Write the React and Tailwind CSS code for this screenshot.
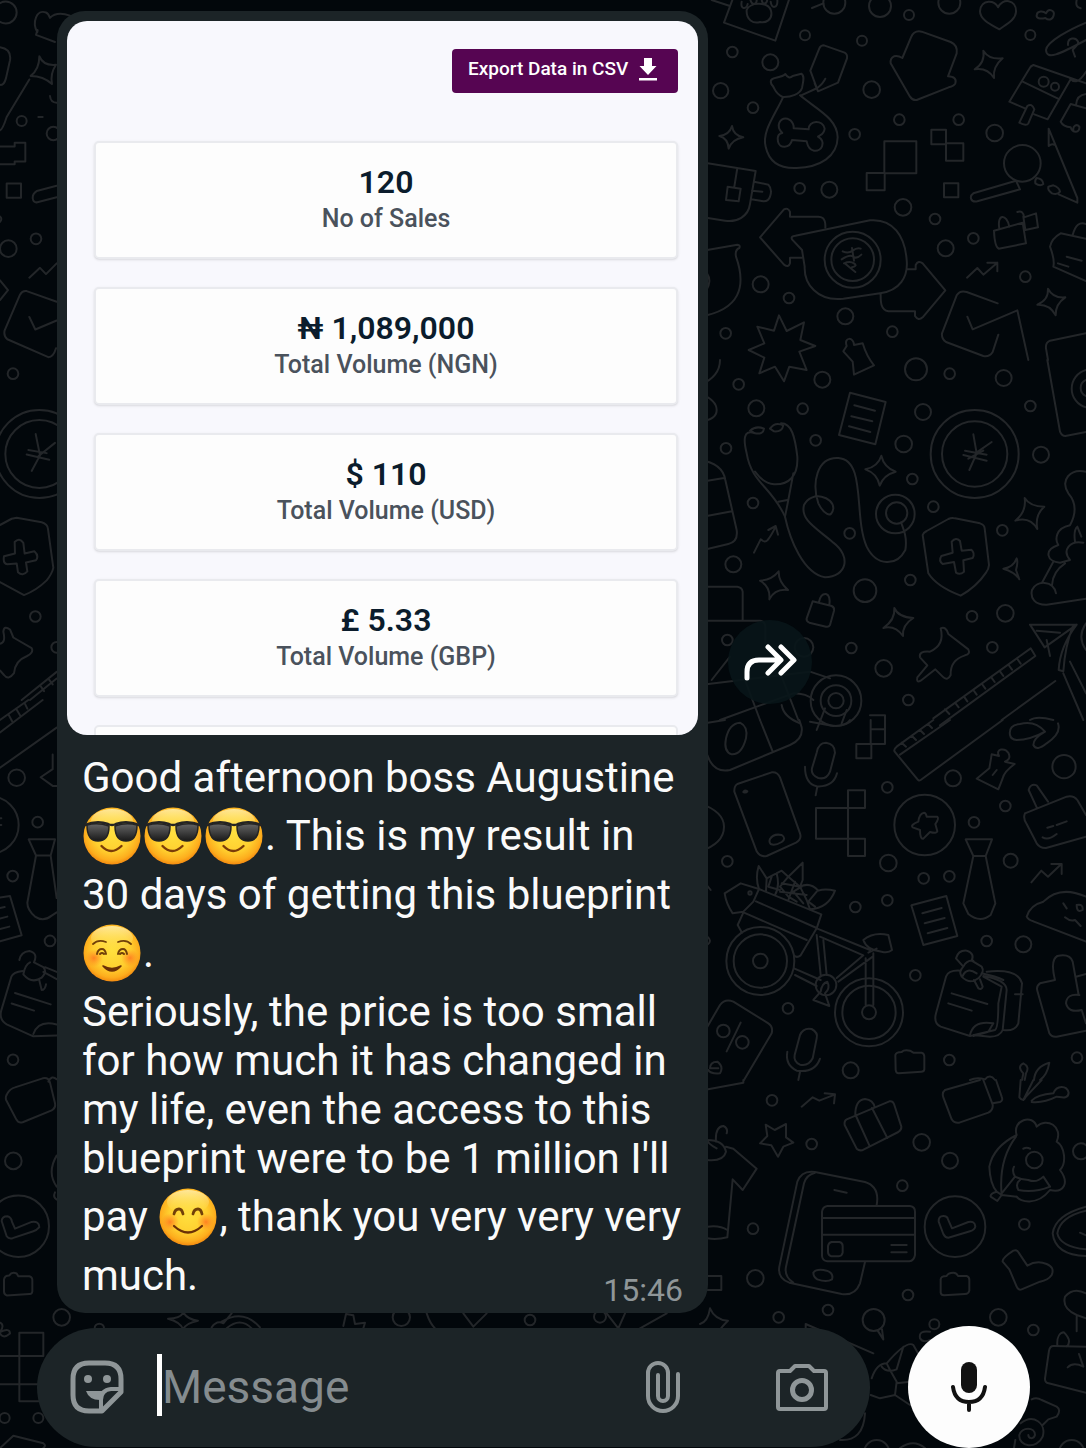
import { useId } from 'react';

const stats = [
    { value: '120', label: 'No of Sales' },
    { value: '₦ 1,089,000', label: 'Total Volume (NGN)' },
    { value: '$ 110', label: 'Total Volume (USD)' },
    { value: '£ 5.33', label: 'Total Volume (GBP)' },
];

// Wallpaper doodles, grouped in tiles. Circles are [cx, cy, r], in tile units.
const tiles = [
    {
        x: 700, y: 0, sx: 3, sy: 3,
        circles: [
            [403, 8, 33], [540, 18, 33], [627, 45, 15], [748, 8, 33], [991, 105, 15], [315, 106, 15], [486, 122, 15],
            [97, 156, 16], [211, 187, 24], [62, 272, 23], [159, 323, 16], [515, 269, 25], [598, 359, 16], [776, 359, 16],
            [464, 403, 16], [884, 399, 25], [299, 565, 16], [388, 569, 24], [609, 622, 25], [705, 657, 16], [820, 715, 16],
            [737, 745, 24], [182, 853, 24], [267, 894, 16], [436, 949, 24], [77, 1000, 16], [577, 995, 16], [976, 830, 16],
            [967, 490, 55], [458, 779, 84], [458, 779, 64], [1031, 245, 15], [1065, 260, 12],
        ],
        paths: [
            'M35 0L90 18M108 -30L72 68L226 122L275 -25', 'M140 30C150 5 205 5 213 32C220 60 195 70 180 66C160 72 138 60 140 30M125 5C120 30 140 28 143 12M150 -5C155 20 172 15 170 -5M185 -5C185 18 202 14 202 -5M212 5C214 28 234 25 232 0',
            'M336 24L370 10', 'M898 88C875 75 840 60 840 34C842 -5 888 0 894 22C905 -5 950 -5 948 36C947 60 915 75 898 88Z',
            'M1010 45C1012 32 1030 32 1038 40C1046 22 1065 32 1061 46C1058 60 1045 62 1036 54C1020 58 1008 55 1010 45Z',
            'M1158 68C1110 88 1040 125 1038 150C1040 180 1075 165 1158 120M1104 135C1102 112 1128 110 1134 125C1138 135 1122 142 1118 150L1125 170', 'M1130 0Q1125 22 1142 25',
            'M607 174L633 112Q642 90 665 95L752 126Q774 136 770 160L744 229Q772 230 766 250Q762 258 746 262L650 300Q638 302 630 290L572 190Q570 174 582 169Q594 166 607 174Z',
            'M850 152Q868 180 908 175Q878 200 882 234Q862 202 824 208Q856 188 850 152Z', 'M96 378Q100 406 130 412Q96 418 86 446Q84 415 58 408Q88 405 96 378Z',
            'M372 136L434 158Q443 163 441 175L414 248L354 274L331 212L358 145Q362 136 372 136ZM302 287L352 264Q370 250 376 236M344 250L354 274',
            'M248 291C222 278 228 268 214 252C204 228 240 238 256 222C262 232 270 236 278 228L304 221C316 228 308 250 306 264C300 282 274 292 248 291Z',
            'M249 292C225 345 185 395 197 440C208 490 245 506 290 504C360 502 412 470 413 412C412 355 350 328 300 286',
            'M247 399C225 378 240 352 262 356C280 362 282 380 281 385L326 388C325 360 370 358 374 386C372 404 362 404 354 410C380 425 365 456 342 452C322 448 322 430 320 424L276 420C270 446 238 446 234 425C230 405 240 400 247 399Z',
            'M0 486L167 513L150 612C145 650 110 668 75 662L0 650M112 504L103 560M83 560L122 566L116 604L78 600ZM162 545L205 554Q218 568 210 590Q205 605 190 604L154 598M156 572L187 575',
            'M1000 195L1158 250M1000 195Q992 198 988 206L928 305L975 325M1003 343L1043 358L1112 238M968 245L1074 296M982 318Q995 308 1003 328L985 370Q980 380 958 368ZM1158 215Q1130 260 1110 235',
            'M1158 325L1112 312L1082 365Q1090 380 1112 382C1118 400 1140 400 1138 380C1130 370 1118 378 1120 390M1128 315Q1130 285 1158 282', 'M1046 386V438Q1055 430 1062 434M1046 386L1132 594V608L1076 583M1060 556Q1078 562 1080 575Q1072 586 1056 580Q1042 570 1045 560ZM1010 534Q1028 536 1030 552Q1020 560 1006 550Q1004 540 1010 534Z',
            'M820 580L948 542L960 568L832 604C810 608 808 588 820 580Z',
            'M553 424H649V520H553ZM500 519H554V571H500ZM694 389H738V433H694ZM738 430H790V482H738ZM732 550H775V592H732Z',
            'M376 683C378 650 360 650 355 650H270V635Q263 622 252 628L180 712L252 794Q266 804 270 790V773H306', 'M276 718C272 710 280 708 286 707L510 661C580 655 615 710 620 780C625 830 600 872 540 880L430 896C350 905 312 850 314 800L306 750L276 718M620 808H647V795Q655 780 668 790L736 871L668 952Q655 964 645 948V934H565C540 930 542 900 542 880',
            'M428 754Q445 762 458 752T482 746M425 778Q450 762 460 770T484 764M456 744L462 782M432 790Q450 782 462 790T456 802M434 790L466 816',
            'M882 692L968 668L978 730L896 746Q884 740 882 692M898 686C890 640 920 640 928 680M952 636Q970 630 972 652L1008 640L1014 682L976 690M970 650L976 690',
            'M1158 716L1082 700Q1055 715 1050 740Q1065 780 1060 800L1158 843M1118 705Q1130 660 1158 672M1074 790L1105 800M1100 770L1145 782',
            'M801 833L832 804L850 824L892 788M862 788H892V814', 'M893 910L800 876Q780 870 770 886L726 1000Q724 1016 738 1026L850 1068Q868 1072 878 1056L895 1004M802 950L818 988L952 931L985 1080', 'M1044 866Q1060 896 1096 892Q1066 912 1067 946Q1050 912 1012 914Q1046 900 1044 866Z',
            'M0 754L112 734Q122 736 118 744Q104 750 108 770C140 860 120 930 0 950M0 802Q30 820 28 845T0 890',
            'M237 946L260 993L312 967L301 1020L346 1038L298 1055L320 1110L268 1100L252 1144L225 1100L178 1120L193 1073L146 1050L193 1030L172 980L222 992Z',
            'M1158 1000L1050 1022Q1036 1028 1038 1045L1044 1080M440 1038C430 1010 462 1010 462 1035L488 1030Q500 1070 522 1096L462 1124L458 1085L430 1054Z',
        ],
    },
    {
        x: 700, y: 360, sx: 3, sy: 3,
        circles: [
            [367, 59, 24], [116, 73, 16], [169, 145, 24], [308, 146, 16], [648, 28, 33], [749, 41, 16], [911, 54, 24], [669, 156, 24],
            [991, 138, 16], [347, 241, 16], [611, 252, 25], [78, 265, 16], [824, 282, 132], [824, 282, 98], [1023, 284, 24],
            [637, 357, 16], [159, 429, 16], [586, 462, 58], [590, 459, 32], [700, 440, 16], [449, 520, 16], [907, 511, 16],
            [100, 613, 24], [495, 692, 34], [631, 660, 16], [816, 769, 16], [916, 760, 25], [82, 840, 16], [454, 864, 16],
            [551, 925, 25], [877, 862, 16], [408, 1022, 76], [408, 1022, 46], [408, 1022, 23], [625, 1020, 16], [312, 862, 28],
        ],
        paths: [
            'M0 100Q50 120 50 150Q50 180 0 184M0 75Q60 50 60 0', 'M450 98L557 126L526 253L417 225ZM463 136L525 152M454 169L517 184M447 199L511 216',
            'M161 218C130 210 130 240 140 280C155 370 215 380 255 470C270 540 310 640 375 652C440 650 455 590 400 548C350 505 300 480 312 435C335 390 400 410 400 445C395 480 370 460 355 430C335 370 350 290 415 294C500 300 460 470 500 560C530 620 590 620 616 570C622 535 612 510 603 487',
            'M243 190C275 190 285 230 292 290C295 350 265 375 222 373Q190 370 165 335M280 340L264 425L255 470M235 425L262 420',
            'M150 212Q168 196 192 206Q190 224 165 220ZM210 206Q225 184 250 196Q246 216 222 214Z',
            'M820 223L830 280L808 330M875 246L826 280M790 285L860 302M795 272L860 284M805 296L850 272',
            'M544 287Q552 322 587 335Q550 345 539 377Q532 340 496 328Q534 320 544 287Z', 'M974 414Q990 440 1033 440Q1004 465 1012 507Q990 468 946 482Q980 455 974 414Z',
            'M668 525Q670 518 680 513L745 477Q755 472 765 475L840 490Q853 494 854 505L867 615Q866 628 858 638Q830 680 782 707Q710 680 685 640ZM755 545Q768 530 780 543L785 572L814 569Q826 580 818 594L790 601L792 635Q780 646 768 638L762 606L728 612Q715 602 724 588L758 578Z',
            'M910 626Q940 622 950 595Q955 605 948 630L958 658Q945 636 910 626Z', 'M162 578L182 538Q195 550 203 540Q212 530 227 500M205 510L227 498L234 524',
            'M0 300Q68 310 76 360L110 510Q115 545 85 552L0 572M0 366L72 354M0 472L96 454', 'M0 680H112Q126 682 128 695V780M0 782H180Q195 784 196 800V850',
            'M236 634Q235 665 264 690Q225 685 208 718Q212 680 180 662Q215 660 236 634Z', 'M338 724L395 738Q404 742 402 752L390 795Q386 802 378 800L328 788Q318 784 320 775ZM357 726Q362 700 378 702Q392 706 388 736',
            'M583 744Q595 772 640 774Q606 795 609 828Q585 795 550 804Q586 780 583 744Z',
            'M722 805Q738 798 745 822L805 868Q812 882 795 886Q750 900 752 945Q742 965 728 950L706 928L662 962Q648 970 652 952L682 916L660 892Q655 872 690 875Q735 855 722 805Z',
            'M700 1075L992 865L1006 888L720 1096M735 1048L748 1062M765 1028L776 1042M792 1010L802 1024M820 990L830 1004M846 972L856 986M874 952L884 966M900 934L910 948M926 915L936 929M952 897L962 911M905 1080L1066 963',
            'M1042 0L1080 215Q1085 228 1096 228L1158 216M1158 30A58 58 0 0 0 1158 142M1158 60A26 26 0 0 0 1158 108',
            'M1158 335C1110 325 1080 360 1105 400Q1140 440 1110 496C1065 505 1065 540 1075 555C1030 570 1040 605 1080 608L1110 600C1085 570 1110 540 1150 548M1125 545Q1120 510 1132 500L1144 530M1060 605L1026 668M1095 610Q1058 635 1056 675M1068 700C1060 660 1010 660 996 690C990 715 1005 735 1040 734L1158 716',
            'M990 794H1130L1034 862ZM1010 812L1080 818M1040 840L1050 888M1130 794Q1080 860 1076 930L1090 934Q1095 860 1118 800M1090 940L1150 1080M1110 905L1158 1000M1158 790Q1130 830 1158 870',
            'M0 975L330 935L390 955M60 1080L280 1000Q320 1000 340 1020M135 960L180 1080M245 950L295 1080M35 960L90 890M245 1035Q250 1070 300 1090M375 1045L350 1110M440 1050L425 1090M510 1066H555V1080M990 1080Q1010 1066 1060 1080',
        ],
    },
    {
        x: 700, y: 720, sx: 3, sy: 3,
        circles: [
            [562, 202, 16], [759, 175, 24], [674, 315, 91], [822, 307, 16], [1092, 140, 35], [916, 258, 16], [565, 429, 25],
            [82, 424, 16], [671, 475, 16], [748, 469, 16], [932, 422, 21], [466, 561, 16], [562, 541, 16], [860, 663, 16],
            [970, 673, 24], [181, 723, 102], [181, 723, 80], [181, 723, 22], [507, 877, 102], [507, 877, 80], [507, 877, 21],
            [646, 766, 16], [264, 865, 16], [70, 933, 19], [127, 967, 19], [452, 1051, 24], [748, 1020, 16], [1131, 1013, 16], [150, 519, 5], [378, 795, 31],
        ],
        paths: [
            'M22 105Q40 160 90 150L270 75Q310 58 305 22L298 0M180 0L217 92M0 12L75 0', 'M120 8Q145 20 138 55Q125 105 95 103Q70 95 78 55Q88 10 120 8Z',
            'M330 5L400 18Q440 18 450 0', 'M512 0V70M555 0V72H512M512 28H555M469 72H514V115H469Z',
            'M350 98Q355 68 378 68Q405 72 405 98L390 155Q380 180 355 174Q332 165 336 145ZM315 140Q315 190 350 199Q400 202 411 160M352 200L347 226',
            'M112 192L215 157Q232 155 240 172L300 340Q306 358 288 368L200 408Q180 412 170 394L103 215Q102 198 112 192ZM210 357Q220 340 245 345Q260 355 245 366Q225 378 212 372Q206 366 210 357ZM130 216Q134 208 142 214Q138 220 130 216',
            'M348 264H444V356H348ZM444 211H495V264H444ZM444 356H495V408H444ZM444 211V408',
            'M672 278Q678 278 680 290L712 290Q718 295 706 312L712 334Q710 342 690 336L670 356Q660 358 660 330L638 322Q630 315 655 305Q658 280 672 278Z',
            'M908 0L662 180Q655 184 650 175L584 95Q580 88 590 80L700 0M600 104L750 0M605 68L618 80M636 48L648 60M660 30L672 42M684 12L696 24',
            'M930 45Q925 15 960 12Q1005 0 1035 35Q990 60 950 60Q932 58 930 45ZM1035 35Q1000 55 1000 75Q1010 95 1040 70Q1085 40 1074 10M0 250Q72 275 72 320Q72 370 0 394',
            'M897 108C885 85 915 82 926 100C932 115 925 120 915 125L944 132Q912 155 908 175L895 208L830 176L868 145L875 103ZM878 165L890 150',
            'M797 358H876L857 408H820ZM820 408L790 550L805 582Q840 610 872 585L886 550L857 408',
            'M975 280L1100 230Q1120 225 1132 240L1158 285M975 280Q968 295 980 312L1010 370Q1020 385 1038 384L1158 350M1010 262L986 210Q990 190 1010 196L1044 245M1042 323L1060 318M1070 315L1100 304M1028 352Q1045 362 1070 342',
            'M994 487L1024 452L1044 470L1084 432M1054 432H1085V462', 'M634 556L739 528L772 648L670 675ZM667 580L725 564M674 610L734 594M683 640L742 624',
            'M1158 530Q1080 495 1030 545Q990 555 980 590Q985 600 1000 604L1158 665M1090 550L1100 565M1095 592Q1110 605 1125 600L1142 618M1130 555Q1150 550 1148 570Q1130 580 1130 555',
            'M74 520L122 490L177 507L364 583L350 625L302 706Q290 715 282 706M74 520Q78 550 98 580L130 575L160 545L177 507M168 544L350 624M132 578L320 660M130 578L113 615L126 638',
            'M177 507Q165 475 176 438L200 475L245 452L265 470L308 428V480L300 500Q330 485 355 512Q375 505 405 512Q385 565 330 568M200 475L198 512M230 460Q240 500 225 525M265 470L240 500L265 530L290 545M265 470L300 500L320 540L330 568M245 490L300 500M240 515L320 525M285 485L265 540M305 500L280 515L310 550M350 515L325 545L345 560M215 470L205 500L240 510',
            'M350 625L510 690M360 650L490 706L410 774M350 645L362 765M370 660L380 765M497 715V855M520 700V855M518 710L415 785M282 745L362 780M285 765L350 798M490 660Q520 635 565 645L576 690Q565 700 545 695Q500 690 490 660M505 698L530 686M362 815L340 840L388 858L375 820Q392 805 382 785Q365 790 362 815',
            'M22 920L60 855Q75 835 100 845L205 910Q220 920 215 940L132 1080M122 908L80 994M30 1045Q30 1025 52 1025Q72 1040 60 1060Q30 1062 25 1050M30 1045H55',
            'M300 945Q310 922 335 927Q355 938 350 955L338 1015Q325 1040 300 1034Q280 1025 284 1005ZM262 995Q255 1035 290 1052Q345 1060 360 1016M300 1056L295 1080',
            'M780 752Q745 750 738 770L708 880Q700 910 722 920L810 948L885 930Q895 925 895 850L905 800L850 770M755 820L862 852M745 850L815 872M810 945Q820 900 880 910L865 935L820 948M850 768Q920 780 920 810L908 930Q900 950 870 950L820 945M860 755Q955 745 966 790L955 910Q945 935 910 930M845 760Q890 770 910 780M945 823H968',
            'M768 715Q775 690 800 692Q825 700 815 722L845 740Q855 755 835 775Q810 795 785 770Q775 755 790 740ZM790 740Q800 720 820 722M788 768Q800 740 830 760M822 780L835 805Q845 810 848 800L840 778',
            'M1065 780Q1050 720 1072 708Q1110 700 1118 725L1136 825M1128 770L1158 762M1065 780L1020 790Q1008 798 1012 812L1048 940Q1055 952 1070 950L1158 932M1138 825Q1100 820 1098 850Q1105 880 1145 870L1158 910',
            'M586 1005Q588 996 605 996Q612 988 630 992L640 998H665Q674 1000 673 1015V1048Q672 1055 664 1055L596 1060Q588 1060 587 1050Z',
            'M966 1080L970 1060Q950 1040 970 1030Q990 1040 978 1060L974 1080M1002 1080Q1005 1040 1048 1028Q1042 1065 1020 1080M810 1080Q830 1070 855 1078Q870 1060 885 1080',
            'M0 640Q30 650 30 662T0 684M0 470L32 510',
        ],
    },
    {
        x: 700, y: 1080, sx: 3, sy: 3,
        circles: [
            [216, 61, 16], [335, 192, 16], [665, 187, 25], [750, 242, 24], [1003, 240, 25], [1143, 214, 24], [607, 317, 16],
            [765, 440, 91], [159, 446, 16], [973, 433, 16], [166, 595, 25], [624, 645, 16], [384, 690, 16], [236, 712, 16],
            [521, 720, 33], [703, 733, 15], [895, 712, 25], [1000, 750, 16], [530, 1118, 38], [1115, 1118, 38],
        ],
        paths: [
            'M0 32L130 8V0M305 80L338 52L358 62L404 44M374 40L405 43L402 70', 'M197 134L224 150L258 132L258 172L280 188L250 200L234 230L214 196L180 190L202 168Z',
            'M440 118L568 64Q578 62 582 72L604 140Q605 150 595 156L492 208Q480 215 470 206L434 135Q432 122 440 118ZM466 106Q465 60 495 57Q520 60 524 82M468 108L508 196M516 84L562 174',
            'M735 30L840 0M735 30Q725 38 730 52L755 118Q762 130 778 128L865 98Q880 90 878 74L850 0M878 70L900 66Q910 62 905 50L888 0M962 0L958 52Q970 68 978 50L1025 0M970 60L1000 0M995 62Q1010 45 1060 40C1070 15 1100 15 1106 38C1105 60 1080 50 1070 50Q1030 70 995 66',
            'M950 165C935 120 1000 100 1010 140C1040 110 1090 140 1070 185C1095 200 1100 250 1080 270C1110 310 1090 340 1050 330C1010 380 960 365 950 350M950 165Q880 200 868 260Q870 310 890 335L905 345Q895 240 948 170M890 335Q870 340 872 350L892 363L905 345L950 350M905 340L945 290Q965 300 985 300Q1010 310 1030 290L1050 320M945 290Q935 275 942 260M960 300Q945 310 955 330Q1000 340 1050 320M970 206Q980 200 990 206',
            'M50 205Q22 190 22 180M22 240Q70 245 78 215Q70 180 22 180M48 185Q45 140 70 138Q85 145 80 160M78 200L100 206L170 266L128 330L98 298L82 472Q50 480 22 475M22 440Q60 435 82 450M22 588H64V630H22',
            'M530 375Q540 320 495 306L345 276Q305 270 292 305L238 560Q232 595 268 608L425 642Q465 648 480 610L495 546M345 278Q318 285 312 310L258 560Q252 590 280 608M403 330L440 338M340 578Q350 565 380 572Q402 580 396 598Q380 608 352 598Q340 590 340 578Z',
            'M382 378H630Q645 380 645 395V525Q642 542 628 544H382Q367 542 366 528V395Q368 380 382 378ZM366 414H645M366 464H645M395 486H418Q428 488 428 498V518Q426 528 416 529H394Q384 526 384 516V498Q386 488 395 486ZM574 495H620M574 517H620',
            'M716 425Q715 408 730 408Q742 408 744 418L756 445L805 426Q825 422 826 440Q824 450 810 454L745 473Q735 473 730 462Z',
            'M1158 380Q1065 405 1058 460Q1065 525 1158 528M1158 392Q1080 410 1072 460Q1080 500 1158 508M1140 458L1158 466',
            'M908 545Q905 535 940 512Q952 508 956 518L982 557Q1010 540 1040 552Q1065 562 1055 585Q1045 600 1020 605L965 628Q955 632 950 620L928 568Z',
            'M722 598Q723 588 740 588Q744 578 760 578Q770 578 774 588H800Q808 590 808 600V632Q806 642 795 642L732 646Q723 646 722 638Z',
            'M30 685Q45 720 84 722Q65 740 60 750M30 685Q24 725 0 732M317 732L520 820M317 732V745M533 752L550 778L546 748',
            'M690 755Q655 750 660 775Q668 790 690 780M515 895Q530 850 560 850Q620 780 640 795L660 830M545 860Q560 880 590 868L610 800M560 850L570 870L590 905L585 945L540 955L512 945M590 910L630 905M585 945L630 975M420 1080Q490 1085 495 1000',
            'M1158 640Q1120 620 1095 650Q1085 685 1130 705L1158 715M1130 710V754M1158 800L1060 798Q1050 798 1047 812L1035 895Q1034 908 1046 910L1158 938M1072 796C1070 770 1080 758 1092 757C1110 775 1110 790 1100 800M1103 862Q1120 845 1150 860L1137 822M995 958Q1010 950 1025 960L1070 980Q1085 990 1070 1010L1045 1018L1028 1035M962 1030C1000 1000 1040 1030 1028 1070C1010 1110 955 1100 958 1065C965 1040 1005 1040 1005 1065C1000 1080 985 1075 985 1065M942 1104L946 1080M600 1104Q640 1075 675 1104',
        ],
    },
    {
        x: 0, y: 0, sx: 3, sy: 2.24,
        circles: [[17, 28, 33], [65, 271, 15], [25, 557, 25], [108, 535, 16], [39, 837, 16], [160, 299, 20], [118, 1017, 132], [118, 1017, 102], [106, 1381, 16], [170, 1450, 16]],
        paths: [
            'M112 72C95 50 110 20 138 28Q145 30 150 40Q170 25 210 35M112 72Q115 60 108 78L165 94', 'M118 126Q130 148 168 145Q150 165 156 188Q130 170 92 170Q118 155 118 126Z',
            'M0 106Q35 110 30 135L18 175Q12 192 0 190M88 178L20 262Q8 290 0 292M115 262L128 262M150 215Q152 230 170 230',
            'M0 328H44V320H76V362H44V368H0M20 411H63V443H20ZM170 416L110 428C92 436 96 456 112 453L170 442M0 485Q8 490 0 497',
            'M88 622L120 600L138 614L170 590M0 628L24 650L0 672M170 676L80 652Q68 650 60 660L14 740Q10 752 22 760L145 800Q160 800 168 780M88 710L106 738L170 718',
            'M107 972L120 1020L95 1055M165 992L115 1022M80 1018L148 1030M85 1008L140 1015',
            'M0 1176L35 1162L50 1160L125 1170Q143 1174 144 1185L160 1272Q156 1285 140 1300Q110 1322 72 1333L0 1304M44 1214Q58 1203 70 1216L74 1240L103 1235Q118 1245 108 1255L78 1260L82 1280Q68 1292 54 1282L50 1262L22 1264Q8 1262 12 1246L45 1240Z',
            'M10 1415Q12 1400 30 1410L40 1428L95 1452Q102 1462 80 1470Q45 1480 42 1508Q25 1525 12 1512L0 1502M10 1415Q18 1440 0 1442M65 1568L170 1505M90 1568L170 1520M120 1535L132 1548M145 1520L158 1533',
        ],
    },
    {
        x: 0, y: 700, sx: 3, sy: 2.096,
        circles: [[50, 163, 25], [113, 256, 16], [38, 369, 16], [150, 505, 16], [39, 754, 16], [40, 966, 25], [55, 1103, 92], [185, 1294, 25], [14, 1505, 15], [115, 1505, 15], [-30, 262, 86]],
        paths: [
            'M0 42L85 0M0 68L128 0M0 142L170 58M25 30L36 44M48 18L60 32M75 8L82 18', 'M158 114V145L122 162L158 180H170M0 248H4M0 262H4',
            'M86 292H165L152 326H108ZM108 326L82 425Q82 440 105 454Q130 466 155 452L170 445M152 326L170 415', 'M0 414L30 411L65 493L0 506M0 436L14 434M0 458L22 454M0 480L28 475',
            'M68 568Q40 570 34 580L4 650Q-4 670 20 680L100 705L170 703M45 614L152 638M35 636L102 651M100 700Q115 670 170 680M58 545Q62 528 88 526Q115 530 102 550L130 560Q142 570 125 582Q95 596 70 575Q75 555 90 550M118 588L125 608Q135 608 138 596M130 570L170 585M135 560L170 570',
            'M22 825Q30 815 45 812L128 793Q145 790 150 802L165 845Q168 855 155 860L68 885Q55 888 48 878L18 838Q16 830 22 825M145 800Q155 785 170 795M170 955Q140 990 170 1020M165 1032Q158 1042 170 1047',
            'M5 1092Q6 1082 22 1082Q34 1084 36 1094L45 1108L95 1094Q118 1092 118 1105Q110 1112 98 1114L38 1128Q26 1130 20 1124Z', 'M12 1215Q13 1206 28 1206Q35 1198 50 1202L55 1208H88Q98 1210 97 1218V1240Q95 1246 88 1245L20 1248Q12 1246 12 1240Z',
            'M58 1326H130V1375H0M58 1326V1470H120M0 1434H118M0 1305Q15 1310 0 1325Q30 1315 30 1328Q10 1340 0 1328M0 1568L40 1542L130 1558Q140 1562 130 1568',
        ],
    },
    {
        x: 30, y: 1170, sx: 3, sy: 3,
        circles: [[208, 475, 14], [1114, 442, 26], [1500, 450, 16], [1710, 440, 18]],
        paths: [
            'M460 428Q475 450 504 452Q465 460 460 478Q450 455 414 446Q450 445 460 428Z', 'M545 472Q560 450 580 460L605 430M575 455Q640 415 690 472M590 475Q630 440 665 475',
            'M940 468L948 432L970 436L975 462L1005 458L1000 475M1190 430Q1200 460 1215 475M1300 430L1330 470L1370 430M1730 430L1765 475L1785 430M1830 475L1910 430',
        ],
    },
];

function Wallpaper() {
    return (
        <svg
            viewBox="0 0 1086 1448"
            preserveAspectRatio="xMidYMin slice"
            fill="none"
            stroke="#232629"
            strokeWidth="2"
            strokeLinecap="round"
            strokeLinejoin="round"
            aria-hidden="true"
            className="absolute inset-0 h-full w-full"
        >
            {tiles.map((tile, i) => (
                <g key={i} transform={`translate(${tile.x} ${tile.y}) scale(${1 / tile.sx} ${1 / tile.sy})`}>
                    {tile.circles.map(([cx, cy, r], j) => (
                        <ellipse key={j} cx={cx} cy={cy} rx={r} ry={(r * tile.sy) / tile.sx} vectorEffect="non-scaling-stroke" />
                    ))}
                    {tile.paths.map((d, j) => (
                        <path key={j} d={d} vectorEffect="non-scaling-stroke" />
                    ))}
                </g>
            ))}
        </svg>
    );
}

const emojiLabels = {
    cool: 'smiling face with sunglasses',
    relaxed: 'smiling face',
    blush: 'smiling face with smiling eyes',
};

function Emoji({ kind }) {
    const id = useId();
    return (
        <svg
            viewBox="0 0 58 58"
            role="img"
            aria-label={emojiLabels[kind]}
            className="my-[5px] mr-0.5 ml-px inline-block h-[58px] w-[58px] align-[-20px]"
        >
            <defs>
                <radialGradient id={`${id}-face`} cx="0.5" cy="0.45" r="0.55">
                    <stop offset="0" stopColor="#ffe03f" />
                    <stop offset="0.6" stopColor="#ffcf2f" />
                    <stop offset="0.87" stopColor="#fdad1d" />
                    <stop offset="1" stopColor="#f38a10" />
                </radialGradient>
                <linearGradient id={`${id}-shine`} x1="0" y1="0" x2="0" y2="1">
                    <stop offset="0" stopColor="#fff3b8" stopOpacity="0.8" />
                    <stop offset="1" stopColor="#ffe45c" stopOpacity="0" />
                </linearGradient>
                <radialGradient id={`${id}-cheek`}>
                    <stop offset="0" stopColor="#ff7420" stopOpacity="0.85" />
                    <stop offset="1" stopColor="#ff8a20" stopOpacity="0" />
                </radialGradient>
                <linearGradient id={`${id}-lens`} x1="0" y1="0" x2="0" y2="1">
                    <stop offset="0" stopColor="#656565" />
                    <stop offset="1" stopColor="#191919" />
                </linearGradient>
            </defs>
            <circle cx="29" cy="29" r="28.5" fill={`url(#${id}-face)`} />
            <ellipse cx="29" cy="14" rx="21" ry="12" fill={`url(#${id}-shine)`} />
            {kind === 'cool' ? (
                <>
                    <path d="M2 18Q14 13 25 17Q29 19 33 17Q44 13 56 18" fill="none" stroke="#242424" strokeWidth="2.5" strokeLinecap="round" />
                    <path d="M4 18Q15 15 26 19Q26 34 15 34Q4 34 4 18Z" fill={`url(#${id}-lens)`} stroke="#242424" strokeWidth="1.5" />
                    <path d="M54 18Q43 15 32 19Q32 34 43 34Q54 34 54 18Z" fill={`url(#${id}-lens)`} stroke="#242424" strokeWidth="1.5" />
                    <path d="M18.5 39Q28 49 38.5 39" fill="none" stroke="#7b3c08" strokeWidth="2.4" strokeLinecap="round" />
                </>
            ) : (
                <>
                    <circle cx="11" cy="34" r="9" fill={`url(#${id}-cheek)`} />
                    <circle cx="47" cy="34" r="9" fill={`url(#${id}-cheek)`} />
                    {kind === 'relaxed' ? (
                        <>
                            <path d="M10 20Q15 15 23 18M48 20Q43 15 35 18" fill="none" stroke="#714009" strokeWidth="1.8" strokeLinecap="round" />
                            <path d="M14 30Q15 25 19 25Q22 25 23 30M17 30Q19 28 21 30M35 30Q36 25 40 25Q43 25 44 30M37 30Q39 28 41 30" fill="none" stroke="#714009" strokeWidth="2" strokeLinecap="round" />
                            <path d="M20 42Q29 52 38 42Q29 47 20 42Z" fill="#6b3006" stroke="#6b3006" strokeWidth="1.6" strokeLinejoin="round" />
                        </>
                    ) : (
                        <>
                            <path d="M15 26Q16 21 20 21Q23 21 24 26M34 26Q35 21 39 21Q42 21 43 26" fill="none" stroke="#714009" strokeWidth="2.8" strokeLinecap="round" />
                            <path d="M15 38Q29 51 43 38" fill="none" stroke="#6b3006" strokeWidth="2.2" strokeLinecap="round" />
                        </>
                    )}
                </>
            )}
        </svg>
    );
}

function StatCard({ value, label }) {
    return (
        <div className="flex h-[118px] shrink-0 flex-col items-center justify-center rounded-[5px] border-2 border-[#e9eaee] bg-[#fdfdfd] shadow-sm">
            <p className="text-[32px] leading-[38px] font-semibold text-[#0b1c2c]">{value}</p>
            <p className="text-[25px] leading-9 font-medium text-[#4a525c]">{label}</p>
        </div>
    );
}

function ReportPreview() {
    return (
        <div className="flex h-[714px] flex-col overflow-hidden rounded-[20px] bg-[#f8f8fd] pt-7 pr-5 pl-[27px]">
            <button className="flex h-11 w-[226px] shrink-0 items-center gap-2 self-end rounded-[4px] bg-[#560552] pr-4 pb-1 pl-4 text-[19px] font-medium whitespace-nowrap text-white">
                Export Data in CSV
                <svg viewBox="0 0 24 28" fill="currentColor" aria-hidden="true" className="h-7 w-6 shrink-0">
                    <path d="M8 3H16V11H20.5L12 20L3.500 11H8ZM3 23H21V25.500H3Z" />
                </svg>
            </button>
            <div className="mt-12 flex flex-col gap-7">
                {stats.map((stat) => (
                    <StatCard key={stat.label} {...stat} />
                ))}
                <div className="h-[118px] shrink-0 rounded-[5px] border-2 border-[#e9eaee] bg-[#fdfdfd]" />
            </div>
        </div>
    );
}

function Message() {
    return (
        <article className="w-[60%] min-w-[651px] rounded-[28px] bg-[#1c2427] px-[10px] pt-[10px] pb-[3px]">
            <ReportPreview />
            <div className="px-[15px] pt-[18px] text-[42px] leading-[49px] text-[#fafafa]">
                <p>
                    Good afternoon boss Augustine <Emoji kind="cool" /><Emoji kind="cool" /><Emoji kind="cool" />. This is my result in 30 days of getting this blueprint <Emoji kind="relaxed" />.
                </p>
                <p className="flow-root">
                    Seriously, the price is too small for how much it has changed in my life, even the access to this blueprint were to be 1 million I'll pay <Emoji kind="blush" />, thank you very very very much.
                    <time className="float-right mt-[19px] text-[32px] leading-10 text-[#8f9698]">15:46</time>
                </p>
            </div>
        </article>
    );
}

function Composer() {
    return (
        <footer className="relative flex items-center gap-[38px] pr-14 pl-[37px]">
            <div className="flex h-[119px] min-w-0 flex-1 items-center rounded-full bg-[#1c2427] pr-[41px] pl-[33px] text-[#8f9698]">
                <button aria-label="Stickers" className="shrink-0">
                    <svg viewBox="0 0 54 54" fill="none" stroke="currentColor" strokeWidth="5" strokeLinejoin="round" className="h-[54px] w-[54px]">
                        <path d="M19 3H35Q51 3 51 19V32L32 51H19Q3 51 3 35V19Q3 3 19 3Z" />
                        <path d="M51 29H41Q31 30 31 40V51" strokeWidth="4" />
                        <circle cx="18" cy="19" r="4" fill="currentColor" stroke="none" />
                        <circle cx="37" cy="19" r="4" fill="currentColor" stroke="none" />
                        <path d="M16 31H36Q31 34 30 40Q19 40 16 31Z" fill="currentColor" stroke="none" />
                    </svg>
                </button>
                <span className="mb-1 ml-[33px] h-[62px] w-[5px] shrink-0 bg-white" />
                <input
                    type="text"
                    aria-label="Message"
                    placeholder="Message"
                    className="h-16 min-w-0 flex-1 bg-transparent text-[46px] text-white outline-none placeholder:text-[#858c8f]"
                />
                <button aria-label="Attach" className="shrink-0">
                    <svg viewBox="0 0 36 54" fill="none" stroke="currentColor" strokeWidth="4" strokeLinecap="round" className="h-[54px] w-9">
                        <path d="M33 14V36A15 15 0 0 1 3 36V13A10 10 0 0 1 23 13V36A5 5 0 0 1 13 36V15" />
                    </svg>
                </button>
                <button aria-label="Camera" className="ml-[94px] shrink-0">
                    <svg viewBox="0 0 54 54" fill="none" stroke="currentColor" strokeWidth="4" strokeLinejoin="round" className="h-[54px] w-[54px]">
                        <path d="M5 11H15L20 6H34L39 11H49Q51 11 51 13V47Q51 49 49 49H5Q3 49 3 47V13Q3 11 5 11Z" />
                        <circle cx="27" cy="30" r="9.500" strokeWidth="5" />
                    </svg>
                </button>
            </div>
            <button aria-label="Record voice message" className="flex size-[122px] shrink-0 items-center justify-center rounded-full bg-[#fdfdfd] text-[#111]">
                <svg viewBox="0 0 36 50" fill="none" stroke="currentColor" strokeWidth="4" strokeLinecap="round" className="h-[50px] w-9">
                    <rect x="10" y="0" width="16" height="31" rx="8" fill="currentColor" stroke="none" />
                    <path d="M2 25Q4 40 18 40T34 25M18 40V48" />
                </svg>
            </button>
        </footer>
    );
}

export default function App() {
    return (
        <main className="relative flex min-h-screen flex-col overflow-hidden bg-[#02070b] font-['Roboto','Liberation_Sans',sans-serif]">
            <Wallpaper />
            <section className="relative flex flex-1 items-center gap-5 pt-[10px] pb-3 pl-[57px]">
                <Message />
                <button aria-label="Forward" className="flex size-[84px] shrink-0 items-center justify-center rounded-full bg-[#081518]/90 text-white">
                    <svg viewBox="0 0 54 38" fill="none" stroke="currentColor" strokeWidth="5" strokeLinecap="round" strokeLinejoin="round" className="h-[38px] w-[54px]">
                        <path d="M4 35V29Q4 17 16 17H37M25 4L38 17L25 30M38 4L51 17L38 30" />
                    </svg>
                </button>
            </section>
            <Composer />
        </main>
    );
}
